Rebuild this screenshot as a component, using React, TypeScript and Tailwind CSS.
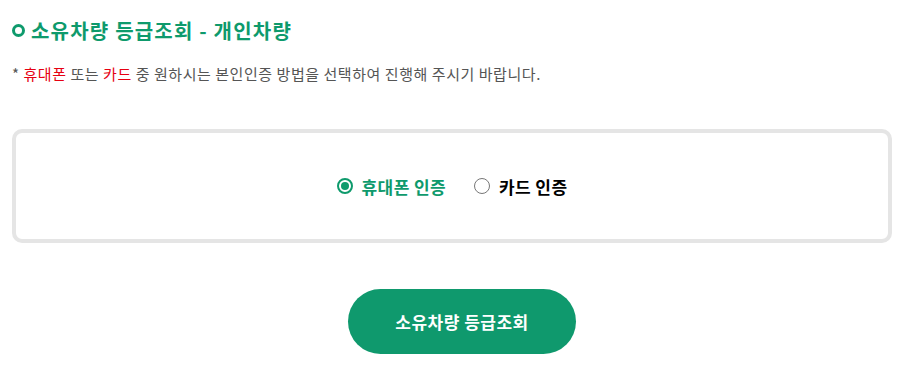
export default function App() {
  return (
    <div className="w-[918px] h-[384px] bg-white px-3 font-['Noto_Sans_CJK_KR',sans-serif]">
      <div className="flex items-center gap-[6px] pt-[17px] h-[44px]">
        <span className="w-[13px] h-[13px] rounded-full border-[3.5px] border-[#0e9a6c]"></span>
        <h1 className="text-[20px] font-bold text-[#0e9a6c] leading-none tracking-[1.2px]">소유차량 등급조회 - 개인차량</h1>
      </div>
      <p className="mt-[21px] text-[15px] text-[#555] leading-[18px] tracking-[0.55px]">
        * <span className="text-[#e60012]">휴대폰</span> 또는 <span className="text-[#e60012]">카드</span> 중 원하시는 본인인증 방법을 선택하여 진행해 주시기 바랍니다.
      </p>
      <div className="mt-[46px] w-[880px] h-[114px] border-4 border-[#e5e5e5] rounded-[10px] flex items-center justify-center gap-[28px]">
        <label className="flex items-center gap-[9px]">
          <span className="w-4 h-4 rounded-full border-2 border-[#0e9a6c] flex items-center justify-center">
            <span className="w-2 h-2 rounded-full bg-[#0e9a6c]"></span>
          </span>
          <span className="text-[17px] font-bold text-[#0e9a6c] leading-none tracking-[0.4px]">휴대폰 인증</span>
        </label>
        <label className="flex items-center gap-[9px]">
          <span className="w-4 h-4 rounded-full border border-[#777]"></span>
          <span className="text-[17px] font-bold text-black leading-none tracking-[0.4px]">카드 인증</span>
        </label>
      </div>
      <div className="flex justify-center mt-[46px]">
        <button className="w-[228px] h-[65px] rounded-full bg-[#0f996d] text-white text-[17px] font-bold tracking-[0.5px] ml-[6px]">소유차량 등급조회</button>
      </div>
    </div>
  );
}
